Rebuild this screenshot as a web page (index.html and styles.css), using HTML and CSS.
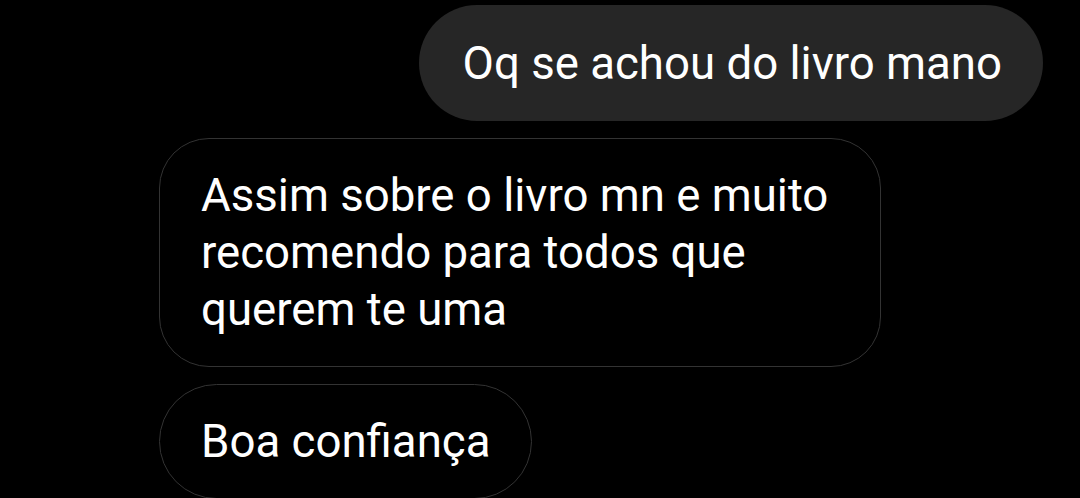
FILE: index.html
```html
<!DOCTYPE html>
<html lang="pt">
<head>
    <meta charset="UTF-8">
    <meta name="viewport" content="width=device-width, initial-scale=1.0">
    <title>Conversa</title>
    <link rel="stylesheet" href="styles.css">
</head>
<body>
    <div class="thread">
        <div class="row sent">
            <div class="bubble bubble-sent">Oq se achou do livro mano</div>
        </div>
        <div class="row received">
            <div class="bubble bubble-received wide">Assim sobre o livro mn e muito recomendo para todos que querem te uma</div>
        </div>
        <div class="row received">
            <div class="bubble bubble-received">Boa confiança</div>
        </div>
    </div>
</body>
</html>
```

FILE: styles.css
```css
body {
    margin: 0;
    background: #000;
    font-family: Roboto, 'Noto Sans', sans-serif;
    color: #fff;
    height: 498px;
    overflow: hidden;
}
.thread {
    display: flex;
    flex-direction: column;
    gap: 17px;
    padding: 5px 37px 0 159px;
}
.row {
    display: flex;
}
.row.sent {
    justify-content: flex-end;
}
.row.received {
    justify-content: flex-start;
}
.bubble {
    box-sizing: border-box;
    font-size: 45.6px;
    line-height: 57px;
    border-radius: 58px;
}
.bubble-sent {
    background: #262626;
    padding: 30px 41px 29px 44px;
}
.bubble-received {
    border: 1.5px solid #333;
    padding: 28px 41px;
}
.bubble-received.wide {
    max-width: 722px;
    border-radius: 50px;
}
```
